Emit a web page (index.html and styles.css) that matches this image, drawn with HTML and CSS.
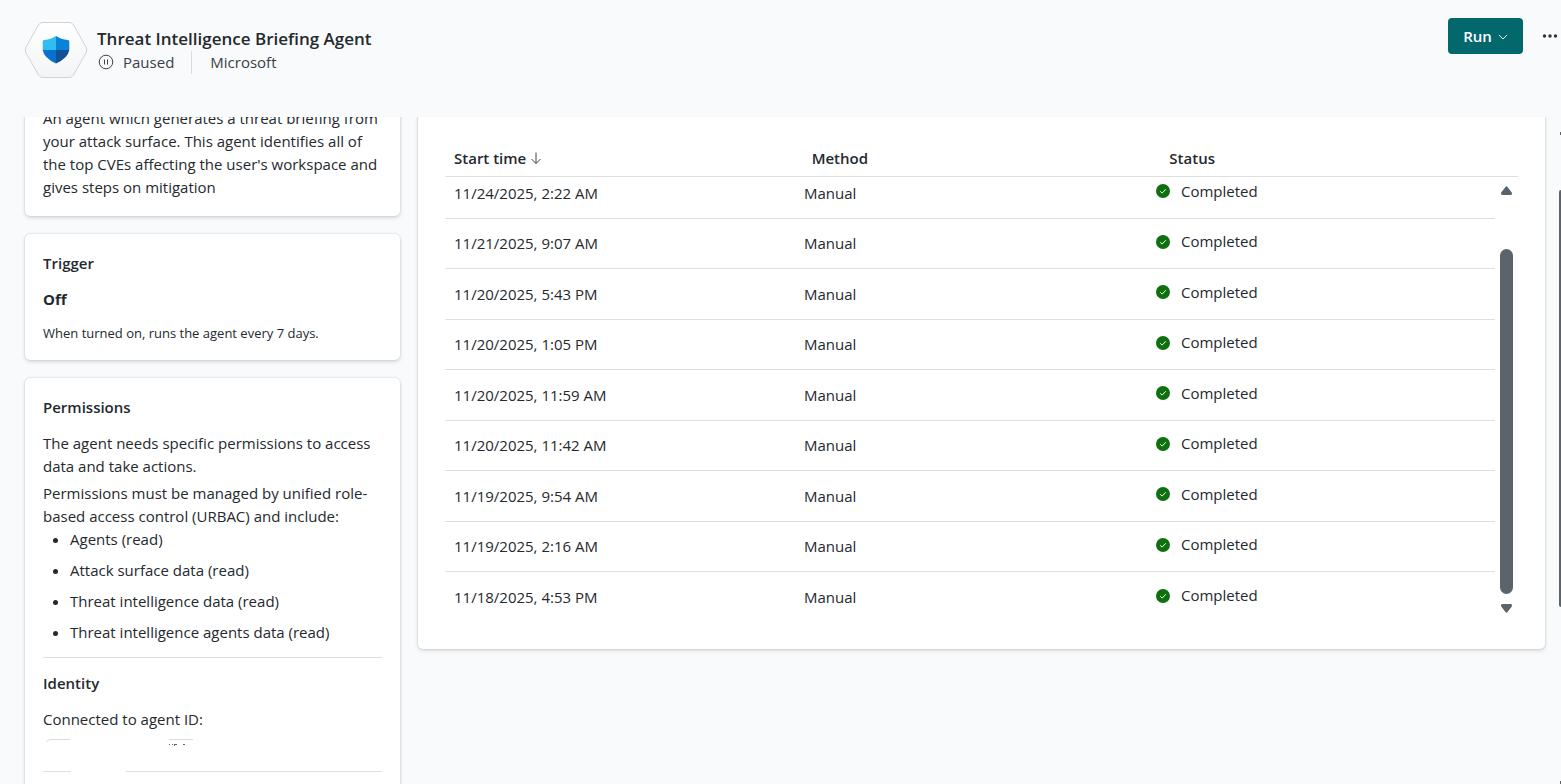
FILE: index.html
```html
<!DOCTYPE html>
<html lang="en">
<head>
    <meta charset="UTF-8">
    <meta name="viewport" content="width=device-width, initial-scale=1.0">
    <title>Threat Intelligence Briefing Agent</title>
    <link rel="stylesheet" href="styles.css">
</head>
<body>

    <header class="header">
        <svg class="logo" width="64" height="58" viewBox="0 0 64 58" aria-hidden="true">
            <defs>
                <linearGradient id="hexFill" x1="0" y1="0" x2="0" y2="1">
                    <stop offset="0" stop-color="#ffffff"/>
                    <stop offset="1" stop-color="#f3f4f5"/>
                </linearGradient>
            </defs>
            <path d="M18.500 1.500h27q2.500 0 4 2.500l12.500 22q1.500 3 0 6l-12.500 22q-1.500 2.500-4 2.500h-27q-2.500 0-4-2.500l-12.500-22q-1.500-3 0-6l12.500-22q1.500-2.500 4-2.500z" fill="url(#hexFill)" stroke="#d1d3d5"/>
            <path d="M32 15v14H18.700V20.500q0-1.500 1.500-1.500Q27 18.500 32 15z" fill="#32bdf0"/>
            <path d="M32 15v14h13.300V20.500q0-1.500-1.500-1.500Q37 18.500 32 15z" fill="#0883d9"/>
            <path d="M18.700 29H32v13.500Q20 37 18.700 29z" fill="#0672cb"/>
            <path d="M45.300 29H32v13.500Q44 37 45.300 29z" fill="#114f96"/>
        </svg>
        <div class="heading">
            <h1>Threat Intelligence Briefing Agent</h1>
            <div class="meta">
                <svg width="17" height="16" viewBox="0 0 17 16" fill="none" stroke="#424242" aria-hidden="true">
                    <circle cx="9" cy="8" r="6.800"/>
                    <path d="M7.500 5.500v5M10.500 5.500v5"/>
                </svg>
                <span class="state">Paused</span>
                <span class="publisher">Microsoft</span>
            </div>
        </div>
        <button class="run" type="button">
            Run
            <svg width="10" height="10" viewBox="0 0 10 10" fill="none" stroke="#ffffff" stroke-width="0.900" aria-hidden="true">
                <path d="M1 4l4 4 4-4"/>
            </svg>
        </button>
        <button class="more" type="button" aria-label="More options">
            <svg width="16" height="4" viewBox="0 0 16 4" fill="#2f3338" aria-hidden="true">
                <circle cx="2.500" cy="2" r="1.700"/>
                <circle cx="8" cy="2" r="1.700"/>
                <circle cx="13.500" cy="2" r="1.700"/>
            </svg>
        </button>
    </header>

    <main class="content">
        <aside class="sidebar">
            <section class="card">
                <p>An agent which generates a threat briefing from your attack surface. This agent identifies all of the top CVEs affecting the user's workspace and gives steps on mitigation</p>
            </section>

            <section class="card">
                <h2>Trigger</h2>
                <h3>Off</h3>
                <p class="note">When turned on, runs the agent every 7 days.</p>
            </section>

            <section class="card">
                <h2>Permissions</h2>
                <p>The agent needs specific permissions to access data and take actions.</p>
                <p class="follow">Permissions must be managed by unified role-based access control (URBAC) and include:</p>
                <ul>
                    <li>Agents (read)</li>
                    <li>Attack surface data (read)</li>
                    <li>Threat intelligence data (read)</li>
                    <li>Threat intelligence agents data (read)</li>
                </ul>
                <hr>
                <h2>Identity</h2>
                <p>Connected to agent ID:</p>
                <!-- Hidden agent ID -->
                <svg class="agent-id" width="160" height="12" viewBox="0 0 160 12" fill="none" aria-hidden="true">
                    <path d="M3 4Q5 1.500 8 1.500H27M126 1.500h24" stroke="#d9dbdd"/>
                    <path d="M126 6.500h1M129 6.500h1M131 6.500h3M140 6.500h2M131 7.500h1" stroke="#5b646b"/>
                </svg>
                <div class="split-line"><span></span><span></span></div>
            </section>
        </aside>

        <section class="card activity">
            <div class="runs">
                <table>
                    <thead>
                        <tr>
                            <th scope="col">Start time
                                <svg width="12" height="12" viewBox="0 0 12 12" fill="none" stroke="#424242" aria-hidden="true">
                                    <path d="M6 0.500v11M1.500 7L6 11.500 10.500 7"/>
                                </svg>
                            </th>
                            <th scope="col">Method</th>
                            <th scope="col">Status</th>
                        </tr>
                    </thead>
                    <tbody id="runRows"></tbody>
                </table>
                <div class="scrollbar">
                    <svg width="13" height="9" viewBox="0 0 13 9" fill="#5b646b" aria-hidden="true"><path d="M5.500 1q1-1.500 2 0l4.300 5.500Q12.500 9 10.500 9h-8Q.5 9 1.200 6.500z"/></svg>
                    <div class="thumb"></div>
                    <svg width="13" height="9" viewBox="0 0 13 9" fill="#5b646b" aria-hidden="true"><path d="M5.500 8q1 1.500 2 0l4.300-5.500Q12.500 0 10.500 0h-8Q.5 0 1.200 2.500z"/></svg>
                </div>
            </div>
        </section>

        <div class="page-scrollbar">
            <div class="page-arrow"></div>
            <div class="page-thumb"></div>
            <div class="page-arrow"></div>
        </div>
    </main>

    <script>
        const runs = [
            '11/24/2025, 2:22 AM',
            '11/21/2025, 9:07 AM',
            '11/20/2025, 5:43 PM',
            '11/20/2025, 1:05 PM',
            '11/20/2025, 11:59 AM',
            '11/20/2025, 11:42 AM',
            '11/19/2025, 9:54 AM',
            '11/19/2025, 2:16 AM',
            '11/18/2025, 4:53 PM'
        ];

        // Build one table row per run
        document.getElementById('runRows').innerHTML = runs.map(time => `
            <tr>
                <td>${time}</td>
                <td>Manual</td>
                <td class="status">
                    <svg width="14" height="14" viewBox="0 0 14 14" aria-hidden="true">
                        <circle cx="7" cy="7" r="7" fill="#0e700e"/>
                        <path d="M4.200 7.300l1.900 1.800 3.700-3.800" fill="none" stroke="#ffffff"/>
                    </svg>
                    Completed
                </td>
            </tr>`).join('');
    </script>
</body>
</html>
```
FILE: styles.css
```css
* {
    box-sizing: border-box;
}

body {
    display: flex;
    flex-direction: column;
    height: 100vh;
    margin: 0;
    overflow: hidden;
    background-color: #f9fafc;
    color: #24292e;
    font-family: "Segoe UI", "Open Sans", sans-serif;
    font-size: 15px;
    line-height: 23px;
}

h1,
h2,
h3,
p,
ul {
    margin: 0;
}

button {
    border: none;
    font-family: inherit;
    cursor: pointer;
}

/* Header */
.header {
    display: flex;
    flex-shrink: 0;
    align-items: flex-start;
    height: 117px;
    padding: 18px 3px 0 24px;
}

.logo {
    margin-top: 3px;
}

.heading {
    flex: 1;
    margin: 9px 0 0 9px;
}

.heading h1 {
    font-size: 17px;
    font-weight: 600;
    line-height: 24px;
}

.meta {
    display: flex;
    align-items: center;
    height: 22px;
    color: #3b4046;
}

.state {
    margin-left: 9px;
}

.publisher {
    margin-left: 17px;
    padding-left: 18px;
    border-left: 1px solid #d9dbdd;
}

.run {
    display: flex;
    align-items: center;
    justify-content: center;
    gap: 6px;
    width: 75px;
    height: 36px;
    padding: 0;
    border-radius: 4px;
    background-color: #02686c;
    color: white;
    font-size: 15px;
    font-weight: 600;
}

.more {
    display: flex;
    align-items: center;
    height: 36px;
    margin-left: 19px;
    padding: 0;
    background: none;
}

/* Page body, scrolled a little under the header */
.content {
    position: relative;
    display: flex;
    flex: 1;
    align-items: flex-start;
    gap: 18px;
    min-height: 0;
    padding: 0 16px 0 25px;
    overflow: hidden;
}

.sidebar {
    display: flex;
    flex-shrink: 0;
    flex-direction: column;
    gap: 18px;
    width: 375px;
    margin-top: -28px;
}

.card {
    padding: 18px 18px 17px;
    border-radius: 5px;
    background-color: white;
    box-shadow: 0 0 2px rgba(0, 0, 0, 0.2), 0 2px 4px rgba(0, 0, 0, 0.12);
}

.card h2,
.card h3 {
    margin-bottom: 13px;
    font-size: 15px;
    font-weight: 600;
}

.card h3 {
    font-weight: 700;
}

.note {
    font-size: 13px;
    line-height: 19px;
}

.follow {
    margin-top: 4px;
}

.card ul {
    padding-left: 27px;
}

.card li {
    margin-bottom: 8px;
}

.card hr {
    height: 1px;
    margin: 13px 0 14px;
    border: none;
    background-color: #dddfe1;
}

.agent-id {
    display: block;
    margin-top: 7px;
}

.split-line {
    display: flex;
    justify-content: space-between;
    gap: 55px;
    margin: 21px 0 24px;
}

.split-line span {
    flex: 1;
    height: 1px;
    background-color: #dddfe1;
}

.split-line span:first-child {
    flex: 0 0 28px;
}

/* Runs table */
.activity {
    flex: 1;
    margin-top: -18px;
    padding: 42px 27px 26px;
}

.runs {
    position: relative;
}

table,
thead,
tbody {
    display: block;
}

tr {
    display: grid;
    grid-template-columns: repeat(3, 1fr);
    align-items: center;
    height: 50px;
    border-bottom: 1px solid #dddfe1;
}

th,
td {
    padding: 0 9px;
    text-align: left;
}

th {
    font-weight: 600;
}

thead tr {
    height: 36px;
}

tbody {
    padding-right: 23px;
    overflow: hidden;
}

tbody tr:nth-child(odd) {
    height: 51px;
}

tbody tr:first-child {
    margin-top: -9px;
}

tbody tr:last-child {
    border-bottom: none;
}

.status {
    display: flex;
    align-items: center;
    gap: 11px;
    padding: 0 11px 4px;
}

.scrollbar {
    position: absolute;
    top: 45px;
    right: 5px;
    bottom: 10px;
    display: flex;
    flex-direction: column;
    width: 13px;
}

.thumb {
    flex: 1;
    margin: 54px 0 10px;
    border-radius: 7px;
    background-color: #5b646b;
}

.page-scrollbar {
    position: absolute;
    top: 15px;
    right: 0;
    bottom: 0;
    display: flex;
    flex-direction: column;
    align-items: flex-end;
    width: 2px;
}

.page-arrow {
    width: 1px;
    height: 3px;
    background-color: #5b646b;
}

.page-thumb {
    width: 2px;
    height: 64%;
    margin: 55px 0 auto;
    border-radius: 2px 0 0 2px;
    background-color: #5b646b;
}
```
